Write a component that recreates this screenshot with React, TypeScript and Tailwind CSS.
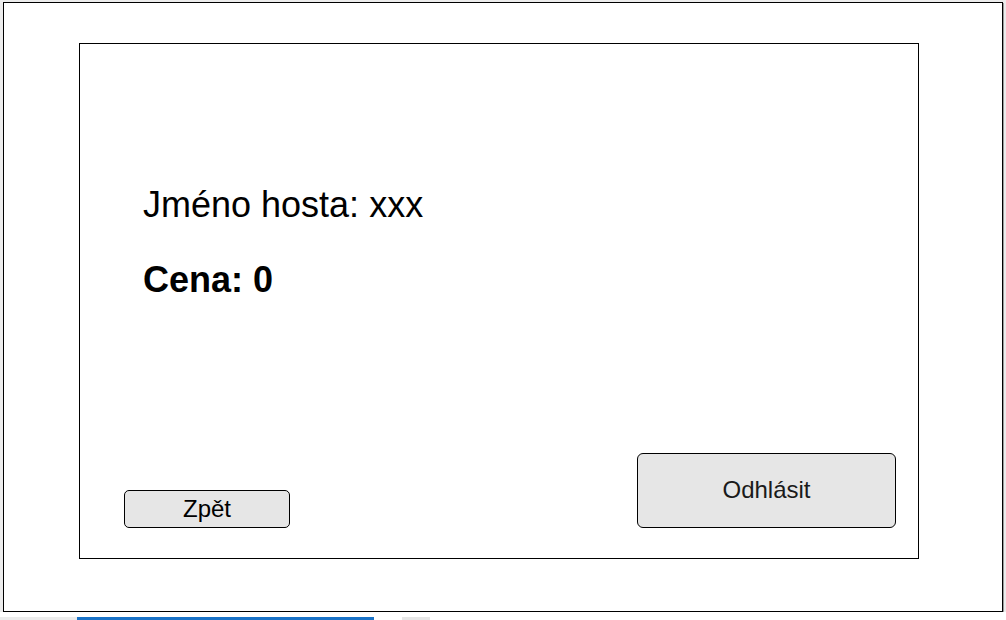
export default function App() {
  return (
    <div className="w-[1006px] h-[620px] bg-[#ececec] overflow-hidden flex flex-col" style={{ fontFamily: '"Liberation Sans", Arial, sans-serif' }}>
      {/* Canvas page */}
      <div className="ml-[3px] mt-[2px] w-[1000px] h-[610px] bg-white border border-black shadow-[1px_1px_0_#9a9a9a] flex flex-col">
        {/* Screen frame */}
        <div className="ml-[75px] mt-[40px] w-[840px] h-[516px] border border-black flex flex-col">
          <div className="pl-[63px] pt-[141px] flex flex-col text-black">
            <p className="text-[36px] leading-[40px]">Jméno hosta: xxx</p>
            <p className="text-[36px] leading-[40px] font-bold mt-[35px]">Cena: 0</p>
          </div>
          <div className="flex-1" />
          <div className="flex items-end justify-between pl-[44px] pr-[22px] pb-[30px]">
            <button className="w-[166px] h-[38px] bg-[#e6e6e6] border border-black rounded-[5px] text-[24px] leading-none text-black">
              Zpět
            </button>
            <button className="w-[259px] h-[75px] bg-[#e6e6e6] border border-black rounded-[6px] text-[24px] leading-none text-[#1a1a1a] pb-[2px]">
              Odhlásit
            </button>
          </div>
        </div>
      </div>
      {/* Page tabs strip */}
      <div className="flex-1 bg-white flex items-end">
        <div className="w-[77px] h-[3px] bg-[#ececec]" />
        <div className="w-[297px] h-[3px] bg-[#1a73c8]" />
        <div className="w-[28px]" />
        <div className="w-[28px] h-[3px] bg-[#e6e6e6]" />
      </div>
    </div>
  );
}
